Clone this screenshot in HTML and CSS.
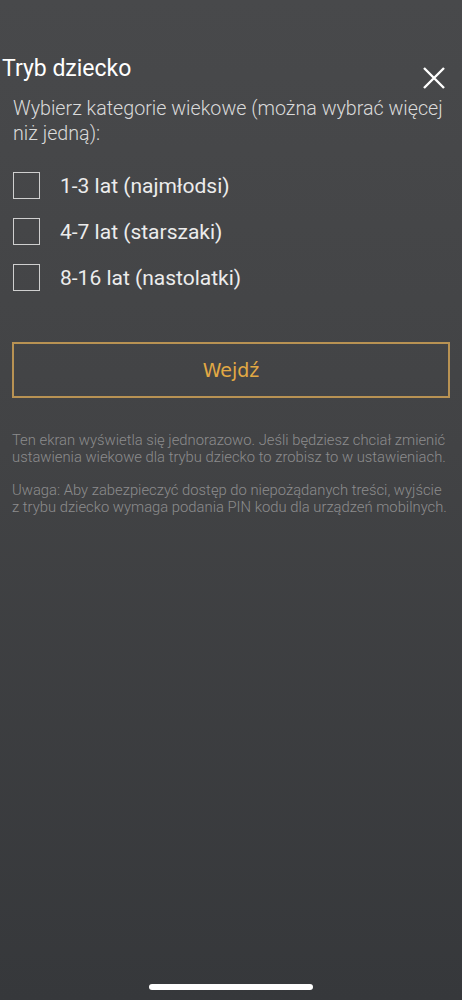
FILE: index.html
```html
<!DOCTYPE html>
<html lang="pl">
<head>
  <meta charset="UTF-8" />
  <meta name="viewport" content="width=device-width, initial-scale=1.0" />
  <title>Tryb dziecko</title>
  <link rel="stylesheet" href="styles.css">
</head>
<body>
  <div class="screen">
    <div class="header">
      <h1>Tryb dziecko</h1>
      <button class="close" aria-label="Zamknij">
        <svg width="24" height="24" viewBox="0 0 24 24">
          <path d="M2 2 L22 22 M22 2 L2 22" stroke="#ffffff" stroke-width="2.4" fill="none" />
        </svg>
      </button>
    </div>

    <div class="content">
      <p class="lead">Wybierz kategorie wiekowe (można wybrać więcej niż jedną):</p>

      <ul class="ages">
        <li><label><input type="checkbox"><span class="box"></span>1-3 lat (najmłodsi)</label></li>
        <li><label><input type="checkbox"><span class="box"></span>4-7 lat (starszaki)</label></li>
        <li><label><input type="checkbox"><span class="box"></span>8-16 lat (nastolatki)</label></li>
      </ul>

      <button class="enter">Wejdź</button>

      <p class="note">Ten ekran wyświetla się jednorazowo. Jeśli będziesz chciał zmienić ustawienia wiekowe dla trybu dziecko to zrobisz to w ustawieniach.</p>
      <p class="note">Uwaga: Aby zabezpieczyć dostęp do niepożądanych treści, wyjście z trybu dziecko wymaga podania PIN kodu dla urządzeń mobilnych.</p>
    </div>

    <div class="home-bar"></div>
  </div>
</body>
</html>
```

FILE: styles.css
```css
/* Global */
body {
  margin: 0;
  font-family: 'Roboto', 'Liberation Sans', sans-serif;
  color: #f5f5f5;
  background: #3a3b3e;
}

.screen {
  height: 1000px;
  display: flex;
  flex-direction: column;
  background: linear-gradient(to bottom, #48494b 0%, #424345 45%, #36383b 100%);
}

/* Header */
.header {
  display: flex;
  justify-content: space-between;
  padding: 55px 16px 0 2px;
}

h1 {
  margin: 0;
  font-size: 23px;
  font-weight: 400;
  line-height: 28px;
  color: #ffffff;
}

.close {
  margin-top: 11px;
  padding: 0;
  border: none;
  background: none;
  width: 24px;
  height: 24px;
  cursor: pointer;
}

/* Content */
.content {
  padding: 0 10px 0 12px;
  flex: 1;
}

.lead {
  margin: 6px 0 0 1px;
  font-size: 19.7px;
  line-height: 25px;
  color: #dadada;
  font-weight: 300;
}

.ages {
  list-style: none;
  margin: 26px 0 0 0;
  padding: 0;
  display: flex;
  flex-direction: column;
  gap: 19px;
}

.ages label {
  display: flex;
  align-items: center;
  gap: 20px;
  font-size: 21px;
  line-height: 26px;
  color: #ececec;
  cursor: pointer;
}

.ages input {
  display: none;
}

.box {
  width: 25px;
  height: 25px;
  margin-left: 1px;
  border: 1px solid #cfcfcf;
  flex-shrink: 0;
}

.ages input:checked + .box {
  background: #e0a843;
  border-color: #e0a843;
}

/* Enter button */
.enter {
  display: block;
  width: calc(100% - 2px);
  height: 56px;
  margin-top: 51px;
  border: 2px solid #b89253;
  background: transparent;
  color: #e2a944;
  font-family: 'DejaVu Sans', sans-serif;
  font-size: 19px;
  cursor: pointer;
}

.note {
  margin: 34px 0 0 0;
  font-size: 14.8px;
  line-height: 17px;
  color: #8c8c8d;
  font-weight: 300;
}

.note + .note {
  margin-top: 16px;
}

.home-bar {
  align-self: center;
  width: 164px;
  height: 6px;
  border-radius: 3px;
  background: #ffffff;
  margin-bottom: 10px;
}
```
